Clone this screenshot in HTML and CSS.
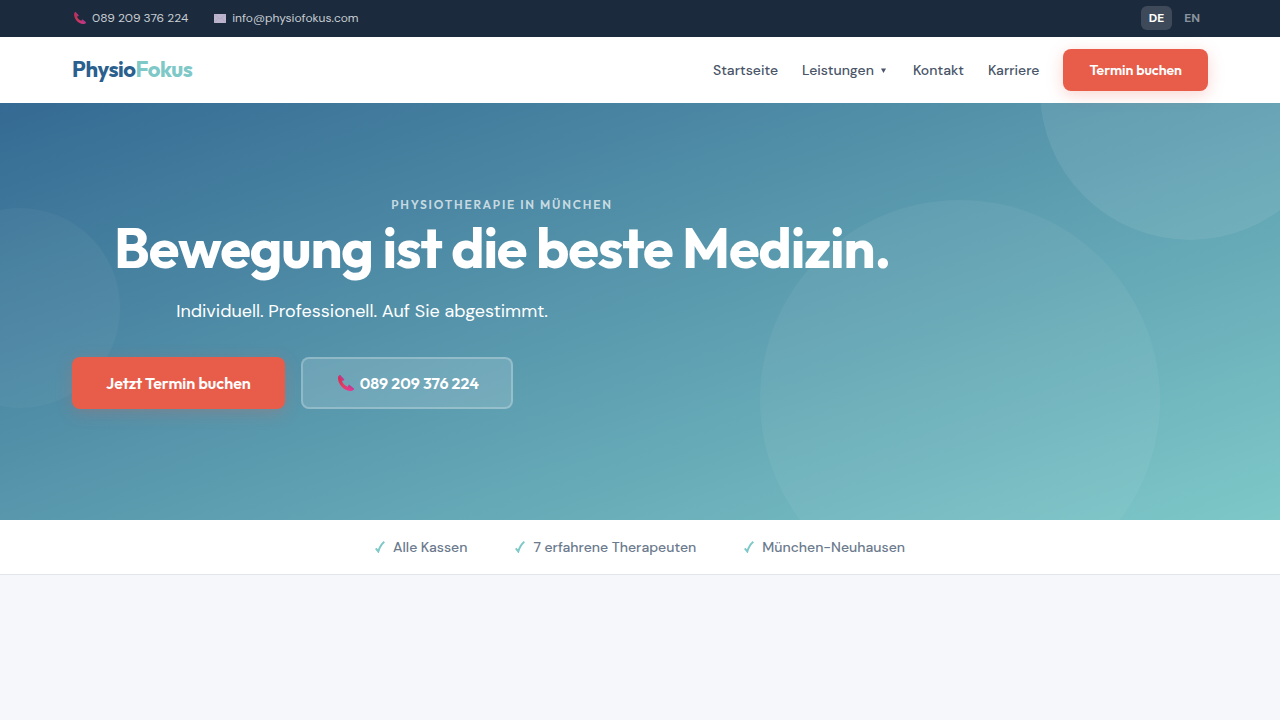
FILE: index.html
```
<!DOCTYPE html>
<html lang="de">
<head>
<meta charset="utf-8">
<meta name="viewport" content="width=device-width, initial-scale=1">
<title>PhysioFokus</title>
<link rel="stylesheet" href="styles.css">
</head>
<body>
<svg class="sprite" aria-hidden="true">
  <defs>
    <linearGradient id="handset" x1="0" y1="0" x2="1" y2="1">
      <stop offset="0" stop-color="#d02a50"/>
      <stop offset="0.5" stop-color="#e83a62"/>
      <stop offset="1" stop-color="#e038a0"/>
    </linearGradient>
    <symbol id="phone" viewBox="0 0 16 16">
      <path d="M2 0 5.500 4 4 6.500C5 8.500 7 10.500 9.500 11.700L12 10.500 16 14C15.500 15.500 14 16 12 16 5.500 15.500 0 9 0 3 0 1.500.8.3 2 0Z" fill="url(#handset)"/>
      <path d="M2 0 6.500 4.500 5 6 1 1ZM11 9.500 16 13.700 15.500 15 9.800 11.400Z" fill="#c03a92"/>
    </symbol>
    <symbol id="mail" viewBox="0 0 12 9">
      <path d="M0 0H12V9H0Z" fill="#d8cde6"/>
      <path d="M0 0 6 5 12 0M0 9 4.500 4M12 9 7.500 4" fill="none" stroke="#c6b9d8" stroke-width=".6"/>
    </symbol>
  </defs>
</svg>
<div class="topbar">
  <div class="container topbar-row">
    <div class="contacts">
      <a class="contact" href="tel:+4989209376224"><svg class="contact-phone"><use href="#phone"/></svg>089 209 376 224</a>
      <a class="contact" href="mailto:info@physiofokus.com"><svg class="contact-mail"><use href="#mail"/></svg>info@physiofokus.com</a>
    </div>
    <div class="languages">
      <button class="language language-active" type="button">DE</button>
      <button class="language" type="button">EN</button>
    </div>
  </div>
</div>
<header class="header">
  <div class="container header-row">
    <a class="logo" href="#">Physio<span class="logo-accent">Fokus</span></a>
    <nav class="nav">
      <a class="nav-link" href="#">Startseite</a>
      <a class="nav-link" href="#">Leistungen<svg class="caret" viewBox="0 0 5 5"><path d="M0 .5H5L2.500 5Z" fill="currentColor"/></svg></a>
      <a class="nav-link" href="#">Kontakt</a>
      <a class="nav-link" href="#">Karriere</a>
      <a class="button button-small" href="#">Termin buchen</a>
    </nav>
  </div>
</header>
<main>
  <section class="hero">
    <span class="circle circle-top"></span>
    <span class="circle circle-large"></span>
    <span class="circle circle-left"></span>
    <div class="container hero-content">
      <div class="hero-text">
        <p class="eyebrow">Physiotherapie in München</p>
        <h1 class="title">Bewegung ist die beste Medizin.</h1>
      </div>
      <p class="subtitle">Individuell. Professionell. Auf Sie abgestimmt.</p>
      <div class="actions">
        <a class="button" href="#">Jetzt Termin buchen</a>
        <a class="button button-ghost" href="tel:+4989209376224"><svg class="button-phone"><use href="#phone"/></svg>089 209 376 224</a>
      </div>
    </div>
  </section>
  <ul class="trust">
    <li class="trust-item"><svg class="check" viewBox="0 0 10 12"><path d="M.8 7.400 3.300 10.500C4.500 6.500 6.500 3 9.300.8" /></svg>Alle Kassen</li>
    <li class="trust-item"><svg class="check" viewBox="0 0 10 12"><path d="M.8 7.400 3.300 10.500C4.500 6.500 6.500 3 9.300.8" /></svg>7 erfahrene Therapeuten</li>
    <li class="trust-item"><svg class="check" viewBox="0 0 10 12"><path d="M.8 7.400 3.300 10.500C4.500 6.500 6.500 3 9.300.8" /></svg>München-Neuhausen</li>
  </ul>
</main>
</body>
</html>
```
FILE: styles.css
```
* {
  box-sizing: border-box;
}

body {
  margin: 0;
  background: #f5f7fb;
  color: #4a5568;
  font-family: "DM Sans", Inter, sans-serif;
  font-size: 14px;
  line-height: 22px;
}

a {
  color: inherit;
  text-decoration: none;
}

.sprite {
  position: absolute;
  width: 0;
  height: 0;
}

.container {
  width: 100%;
  max-width: 1200px;
  margin: 0 auto;
  padding: 0 32px;
}

.topbar {
  background: #1b2b3d;
  color: #c9ced4;
  font-size: 12px;
}

.topbar-row {
  display: flex;
  align-items: center;
  justify-content: space-between;
  padding-top: 6px;
  padding-bottom: 7px;
}

.contacts {
  display: flex;
  gap: 26px;
}

.contact {
  display: flex;
  align-items: center;
}

.contact-phone {
  width: 12px;
  height: 12px;
  margin: 0 6px 0 2px;
  opacity: .85;
}

.contact-mail {
  width: 12px;
  height: 9px;
  margin-right: 6px;
  opacity: .85;
}

.languages {
  display: flex;
  gap: 4px;
}

.language {
  padding: 0 8px;
  border: 0;
  border-radius: 6px;
  background: transparent;
  color: #8a939d;
  font: 700 12px/24px "DM Sans", "Open Sans", sans-serif;
}

.language-active {
  background: #3e4a59;
  color: #fff;
}

.header {
  position: relative;
  z-index: 1;
  background: #fff;
}

.header-row {
  display: flex;
  align-items: center;
  justify-content: space-between;
  padding-top: 12px;
  padding-bottom: 12px;
}

.logo {
  padding-bottom: 2px;
  color: #2b5f8e;
  font-family: Outfit, Lato, sans-serif;
  font-size: 22px;
  font-weight: 700;
  letter-spacing: -.02em;
}

.logo-accent {
  color: #7ec8c8;
}

.nav {
  display: flex;
  align-items: center;
  gap: 24px;
}

.nav-link {
  display: flex;
  align-items: center;
  font-weight: 500;
}

.caret {
  width: 5px;
  height: 5px;
  margin: 0 3px 0 7px;
}

.button {
  display: flex;
  align-items: center;
  padding: 14px 34px;
  border-radius: 8px;
  background: #e85d4a;
  box-shadow: 0 4px 16px rgba(232, 93, 74, .25);
  color: #fff;
  font-family: Outfit, Lato, sans-serif;
  font-size: 16px;
  font-weight: 600;
  line-height: 24px;
}

.button-small {
  padding: 10px 26px;
  font-size: 14px;
  line-height: 22px;
}

.button-ghost {
  padding: 12px 32px;
  border: 2px solid rgba(255, 255, 255, .35);
  background: rgba(255, 255, 255, .15);
  background-clip: padding-box;
  box-shadow: none;
}

.button-phone {
  width: 16px;
  height: 16px;
  margin: 0 6px 0 3px;
}

.hero {
  position: relative;
  overflow: hidden;
  padding: 92px 0 111px;
  background: linear-gradient(160deg, #346a93 0%, #5a9aae 50%, #7ec8c8 100%);
}

.circle {
  position: absolute;
  border-radius: 50%;
  background: rgba(255, 255, 255, .08);
}

.circle-top {
  top: -163px;
  right: -60px;
  width: 300px;
  height: 300px;
}

.circle-large {
  right: 120px;
  bottom: -80px;
  width: 400px;
  height: 400px;
  background: rgba(255, 255, 255, .05);
}

.circle-left {
  top: 105px;
  left: -80px;
  width: 200px;
  height: 200px;
  background: rgba(255, 255, 255, .04);
}

.hero-content {
  position: relative;
}

.hero-text {
  max-width: 860px;
  text-align: center;
}

.eyebrow {
  margin: 0;
  color: rgba(255, 255, 255, .7);
  font-family: Outfit, Lato, sans-serif;
  font-size: 12px;
  font-weight: 600;
  letter-spacing: .15em;
  line-height: 20px;
  text-transform: uppercase;
}

.title {
  margin: 0 0 16px;
  color: #fff;
  font-family: Outfit, Lato, sans-serif;
  font-size: 56px;
  font-weight: 700;
  letter-spacing: -.02em;
  line-height: 66px;
}

.subtitle {
  max-width: 580px;
  margin: 0 0 32px;
  color: #fff;
  font-size: 18px;
  line-height: 28px;
  text-align: center;
}

.actions {
  display: flex;
  flex-wrap: wrap;
  gap: 16px;
}

.trust {
  display: flex;
  flex-wrap: wrap;
  justify-content: center;
  gap: 48px;
  margin: 0;
  padding: 16px 32px;
  border-bottom: 1px solid #e2e6ec;
  background: #fff;
  color: #6b7a8d;
  font-weight: 500;
  list-style: none;
}

.trust-item {
  display: flex;
  align-items: center;
}

.check {
  width: 10px;
  height: 12px;
  margin-right: 8px;
  fill: none;
  stroke: #7ec8c8;
  stroke-width: 2;
}
```
